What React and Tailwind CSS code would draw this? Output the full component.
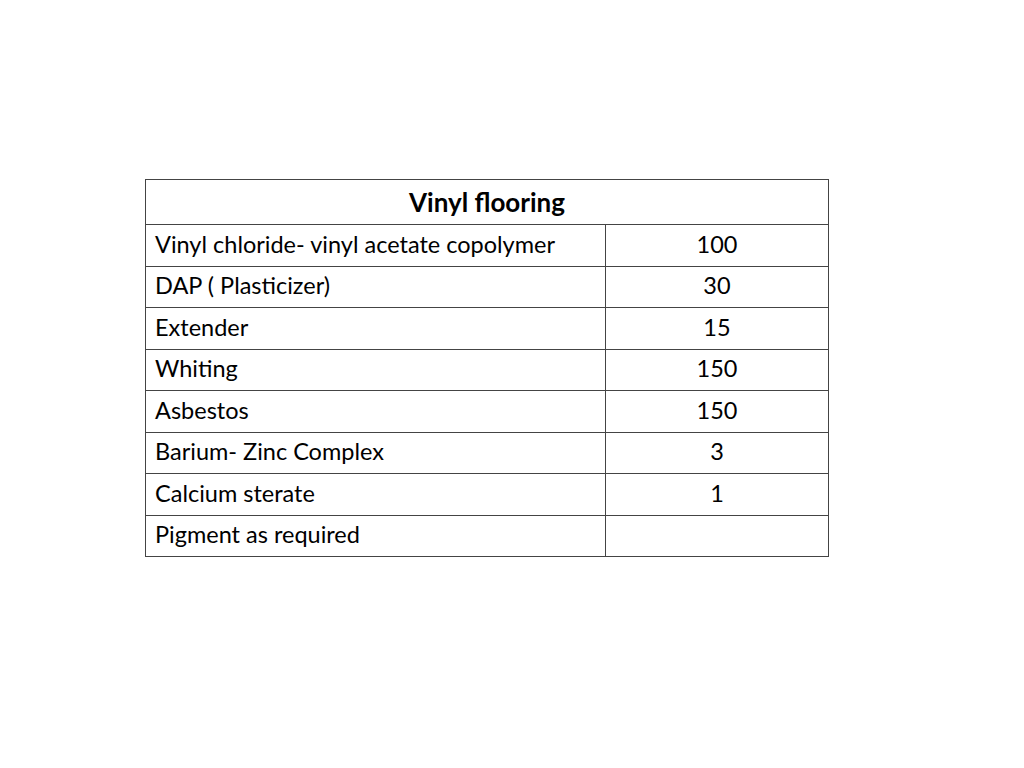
const rows = [
  ["Vinyl chloride- vinyl acetate copolymer", "100", "h-[42px]"],
  ["DAP ( Plasticizer)", "30", "h-[41px]"],
  ["Extender", "15", "h-[42px]"],
  ["Whiting", "150", "h-[41px]"],
  ["Asbestos", "150", "h-[42px]"],
  ["Barium- Zinc Complex", "3", "h-[41px]"],
  ["Calcium sterate", "1", "h-[42px]"],
  ["Pigment as required", "", "h-[41px]"],
];

export default function App() {
  return (
    <div className="w-[1024px] h-[768px] bg-white font-['Lato','Noto_Sans',sans-serif] text-black">
      <div className="pt-[179px] pl-[145px]">
        <table className="border-collapse w-[684px] text-[23.5px] leading-none">
          <thead>
            <tr className="h-[45px]">
              <th colSpan={2} className="border border-[#444] text-[26px] font-bold text-center align-middle">
                Vinyl flooring
              </th>
            </tr>
          </thead>
          <tbody>
            {rows.map(([name, val, h]) => (
              <tr key={name} className={h}>
                <td className="border border-[#444] w-[460px] pl-[9px] align-middle pb-[2px]">{name}</td>
                <td className="border border-[#444] text-center align-middle pb-[2px]">{val}</td>
              </tr>
            ))}
          </tbody>
        </table>
      </div>
    </div>
  );
}
